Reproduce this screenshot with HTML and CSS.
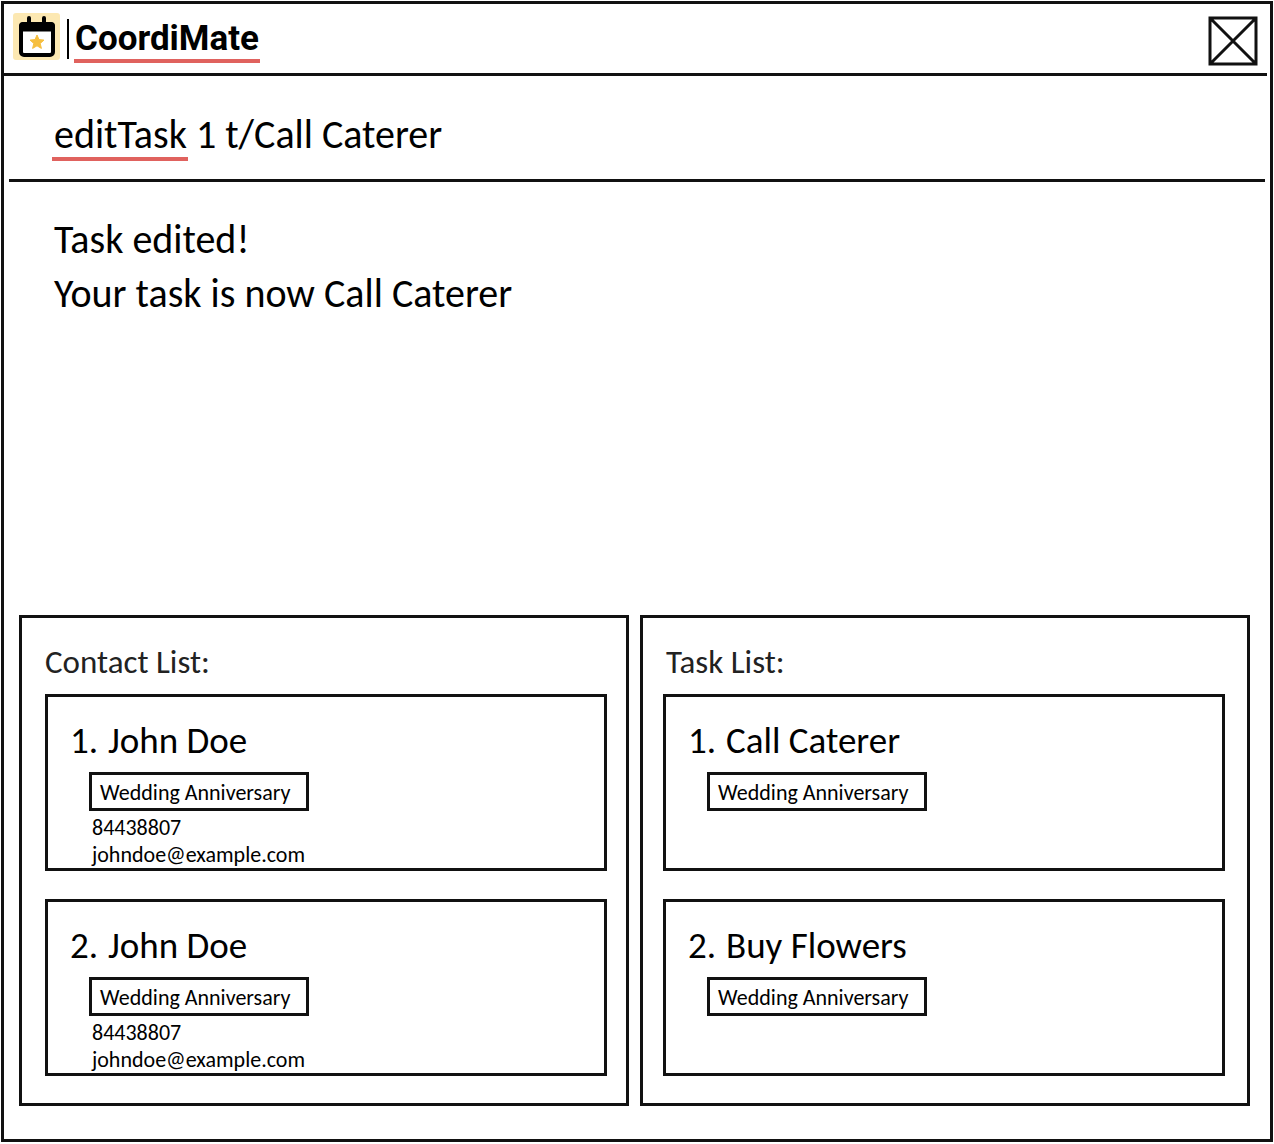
FILE: index.html
```html
<!DOCTYPE html>
<html lang="en">
<head>
  <meta charset="utf-8">
  <meta name="viewport" content="width=device-width, initial-scale=1">
  <title>CoordiMate</title>
  <link rel="stylesheet" href="styles.css">
</head>
<body>
  <div class="window">
    <header class="titlebar">
      <svg class="logo" viewBox="0 0 48 48" aria-hidden="true">
        <rect width="47" height="47" rx="3" fill="#fce8b2"/>
        <rect x="8" y="11" width="32" height="31" rx="3" fill="#fff" stroke="#000" stroke-width="4"/>
        <path d="M6 18.500v-5.500a4 4 0 0 1 4-4h28a4 4 0 0 1 4 4v5.500z"/>
        <path d="M16 5v6M31 5v6" stroke="#000" stroke-width="4" stroke-linecap="round"/>
        <path d="M24 22l2 4.600 5 .5-3.800 3.300 1.200 5-4.400-2.600-4.400 2.600 1.200-5-3.800-3.300 5-.5z" fill="#f6bf3f" stroke="#f6bf3f" stroke-linejoin="round"/>
      </svg>
      <h1 class="brand"><span class="brand-name">CoordiMate</span></h1>
      <button class="close" type="button" aria-label="Close">
        <svg viewBox="0 0 50 50" fill="none" stroke="#111" stroke-width="3" aria-hidden="true">
          <path d="M2 2h46v46H2zM2 2l46 46M48 2L2 48"/>
        </svg>
      </button>
    </header>

    <form class="command">
      <input class="command-input" type="text" value="editTask 1 t/Call Caterer" aria-label="Command" spellcheck="false">
      <span class="command-mark" aria-hidden="true"></span>
    </form>

    <main class="content">
      <section class="output" aria-label="Result">
        <p>Task edited!</p>
        <p>Your task is now Call Caterer</p>
      </section>

      <div class="panels">
        <section class="panel panel-contacts">
          <h2 class="panel-title">Contact List:</h2>
          <article class="card">
            <h3 class="card-title"><span class="card-number">1.</span>John Doe</h3>
            <span class="tag">Wedding Anniversary</span>
            <p class="detail">84438807</p>
            <p class="detail">johndoe@example.com</p>
          </article>
          <article class="card">
            <h3 class="card-title"><span class="card-number">2.</span>John Doe</h3>
            <span class="tag">Wedding Anniversary</span>
            <p class="detail">84438807</p>
            <p class="detail">johndoe@example.com</p>
          </article>
        </section>

        <section class="panel panel-tasks">
          <h2 class="panel-title">Task List:</h2>
          <article class="card">
            <h3 class="card-title"><span class="card-number">1.</span>Call Caterer</h3>
            <span class="tag">Wedding Anniversary</span>
          </article>
          <article class="card">
            <h3 class="card-title"><span class="card-number">2.</span>Buy Flowers</h3>
            <span class="tag">Wedding Anniversary</span>
          </article>
        </section>
      </div>
    </main>
  </div>
</body>
</html>
```
FILE: styles.css
```css
* {
  box-sizing: border-box;
}

body {
  margin: 0;
  padding: 1px 1px 2px;
  background: #fff;
  color: #000;
  font-family: Carlito, Lato, sans-serif;
}

h1, h2, h3, p {
  margin: 0;
  font-weight: 400;
}

.window {
  display: flex;
  flex-direction: column;
  min-height: calc(100vh - 3px);
  border: 3px solid #111;
}

.titlebar {
  display: flex;
  align-items: flex-start;
  height: 72px;
  margin-right: 3px;
  padding: 9px 9px 0;
  border-bottom: 3px solid #111;
}

.logo {
  width: 48px;
  height: 48px;
}

.brand {
  height: 40px;
  margin: 6px 0 0 6px;
  padding-left: 5px;
  border-left: 2px solid #000;
  font: 700 35px/40px Roboto, sans-serif;
}

.brand-name {
  display: block;
  height: 44px;
  padding: 0 1px;
  border-bottom: 4px solid #e0625e;
}

.close {
  width: 50px;
  height: 50px;
  margin: 3px 0 0 auto;
  padding: 0;
  border: 0;
  background: none;
}

.close svg {
  display: block;
}

.command {
  position: relative;
  margin: 0 5px;
  padding: 34px 45px 21px;
  border-bottom: 3px solid #111;
}

.command-input {
  display: block;
  width: 100%;
  height: 48px;
  padding: 0;
  border: 0;
  outline: 0;
  background: none;
  color: inherit;
  font: inherit;
  font-size: 40px;
}

.command-mark {
  position: absolute;
  top: 81px;
  left: 43px;
  width: 136px;
  height: 4px;
  background: #e0625e;
}

.content {
  display: flex;
  flex: 1;
  flex-direction: column;
  padding: 31px 20px 33px 15px;
}

.output {
  flex: 1;
  padding-left: 35px;
  font-size: 40px;
  line-height: 54px;
}

.panels {
  display: grid;
  grid-template-columns: 1fr 1fr;
  gap: 11px;
}

.panel {
  display: flex;
  flex-direction: column;
  gap: 28px;
  border: 3px solid #111;
}

.panel-contacts {
  padding: 26px 19px 27px 23px;
}

.panel-tasks {
  padding: 26px 22px 27px 20px;
}

.panel-title {
  margin-bottom: -14px;
  color: #222;
  font-size: 33px;
  line-height: 36px;
}

.panel-tasks .panel-title {
  padding-left: 3px;
}

.card {
  min-height: 177px;
  padding: 22px 22px 0;
  border: 3px solid #111;
}

.card-title {
  display: flex;
  font-size: 37px;
  line-height: 44px;
}

.card-number {
  width: 38px;
}

.tag {
  display: block;
  width: 220px;
  margin: 9px 0 3px 19px;
  padding: 2px 8px 0;
  border: 3px solid #111;
  font-size: 22px;
  line-height: 31px;
  white-space: nowrap;
}

.detail {
  padding-left: 22px;
  font-size: 22px;
  line-height: 27px;
}
```
